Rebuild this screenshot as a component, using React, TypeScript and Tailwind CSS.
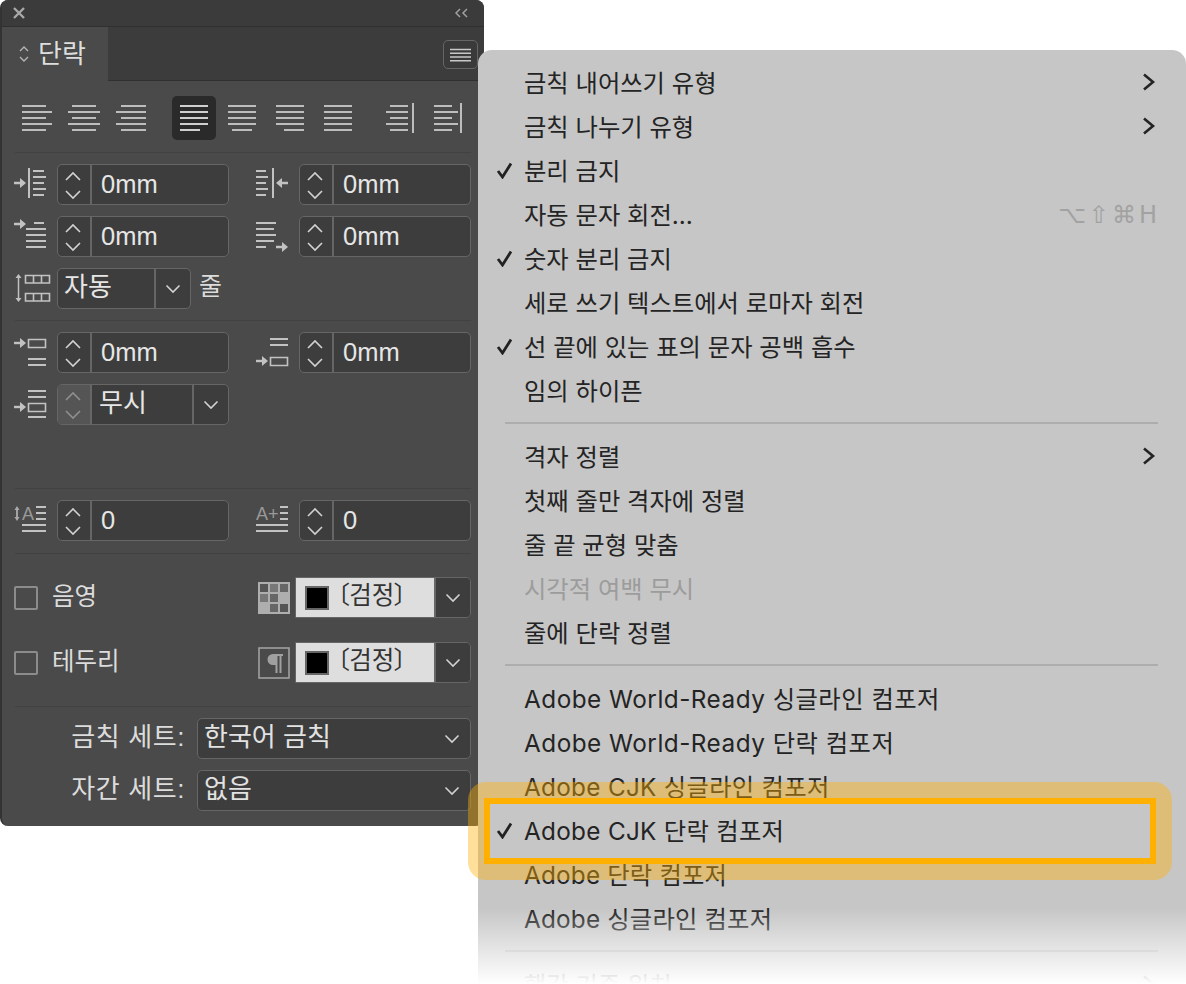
import type { ReactNode } from "react";

const font = "font-['Liberation_Sans','Noto_Sans_CJK_KR',sans-serif]";

function Up({ x, y, dim }: { x: number; y: number; dim?: boolean }) {
  return <path d={`M${x - 7} ${y + 4}L${x} ${y - 3}L${x + 7} ${y + 4}`} stroke={dim ? "#8f8f8f" : "#d2d2d2"} strokeWidth="1.6" fill="none" />;
}
function Down({ x, y, dim }: { x: number; y: number; dim?: boolean }) {
  return <path d={`M${x - 7} ${y - 4}L${x} ${y + 3}L${x + 7} ${y - 4}`} stroke={dim ? "#8f8f8f" : "#d2d2d2"} strokeWidth="1.6" fill="none" />;
}

function Chevron() {
  return (
    <svg width="16" height="10" viewBox="0 0 16 10" fill="none">
      <path d="M1.5 1.5L8 8L14.5 1.5" stroke="#d2d2d2" strokeWidth="1.6" />
    </svg>
  );
}

function Stepper({ dim }: { dim?: boolean }) {
  return (
    <div className={`w-[34px] h-full shrink-0 border-r-2 border-[#666666] ${dim ? "bg-[#555555]" : ""}`}>
      <svg width="33" height="39" viewBox="0 0 33 39">
        <Up x={15} y={11} dim={dim} />
        <Down x={15} y={30} dim={dim} />
      </svg>
    </div>
  );
}

function Field({ value }: { value: string }) {
  return (
    <div className="w-[172px] h-[41px] flex items-center rounded-[5px] border border-[#666666] bg-[#3d3d3d] overflow-hidden">
      <Stepper />
      <span className="pl-[9px] pt-[1px] text-[25.5px] leading-none text-[#e6e6e6]">{value}</span>
    </div>
  );
}

function Glyph({ box, children }: { box: string; children: ReactNode }) {
  return (
    <svg width="43" height="41" viewBox={box} className="shrink-0" stroke="#c2c2c2" strokeWidth="2" fill="none">
      {children}
    </svg>
  );
}

function ArrowRight({ x, y, len = 12 }: { x: number; y: number; len?: number }) {
  return (
    <g>
      <path d={`M${x} ${y}H${x + len - 3}`} strokeWidth="2.4" />
      <path d={`M${x + len - 6} ${y - 5}L${x + len} ${y}L${x + len - 6} ${y + 5}Z`} fill="#c2c2c2" stroke="none" />
    </g>
  );
}

function Lines({ rows }: { rows: [number, number, number][] }) {
  return <path d={rows.map(([a, b, y]) => `M${a} ${y}H${b}`).join("")} />;
}

function AlignIcon({ rows, bar, width, active }: { rows: [number, number][]; bar?: boolean; width: number; active?: boolean }) {
  return (
    <svg width={width} height="32" viewBox={`0 0 ${width} 32`} stroke={active ? "#cfcfcf" : "#bdbdbd"} strokeWidth="2" fill="none" className="shrink-0">
      {rows.map(([a, b], i) => (
        <path key={i} d={`M${a} ${4 + i * 6}H${b}`} />
      ))}
      {bar && <path d={`M${width - 1} 1V31`} />}
    </svg>
  );
}

function Separator({ className }: { className: string }) {
  return <div className={`h-px mx-[13px] bg-[#414141] ${className}`} />;
}

function ColorRow({ label, icon, className }: { label: string; icon: ReactNode; className: string }) {
  return (
    <div className={`flex items-center h-[41px] pl-[12px] ${className}`}>
      <div className="w-[24px] h-[24px] rounded-[2px] border-2 border-[#8c8c8c] shrink-0" />
      <span className="ml-[14px] pb-[1px] text-[24.5px] leading-none text-[#dcdcdc]">{label}</span>
      <div className="ml-auto mr-[5px]">{icon}</div>
      <div className="mr-[13px] w-[176px] h-[41px] flex rounded-r-[5px] border border-[#666666] overflow-hidden">
        <div className="flex-1 bg-[#dedede] flex items-center pl-[9px]">
          <div className="w-[24px] h-[24px] bg-black border-2 border-[#666666]" />
          <span className="ml-[8px] pb-[2px] text-[24.5px] leading-none text-[#333333] [font-feature-settings:'palt']">〔검정〕</span>
        </div>
        <div className="w-[36px] bg-[#3d3d3d] border-l-2 border-[#666666] flex items-center justify-center">
          <Chevron />
        </div>
      </div>
    </div>
  );
}

function SelectRow({ label, value, className }: { label: string; value: string; className: string }) {
  return (
    <div className={`flex items-center ${className}`}>
      <span className="w-[183px] pb-[3px] text-right text-[26px] tracking-[0.6px] leading-none text-[#dcdcdc] whitespace-nowrap">{label}</span>
      <div className="ml-[12px] w-[274px] h-[41px] flex items-center justify-between pl-[6px] pr-[10px] rounded-[5px] border border-[#666666] bg-[#3d3d3d]">
        <span className="pb-[3px] text-[26px] leading-none text-[#e2e2e2]">{value}</span>
        <Chevron />
      </div>
    </div>
  );
}

function Panel() {
  return (
    <div className="w-[484px] h-[826px] rounded-[8px] bg-[#4a4a4a] border-l-2 border-[#333333] overflow-hidden">
      <div className="h-[27px] bg-[#3b3b3b] border-b border-[#303030] flex items-center justify-between pl-[10px] pr-[15px]">
        <svg width="14" height="14" viewBox="0 0 14 14" stroke="#a8a8a8" strokeWidth="2.4">
          <path d="M2 2L12 12M12 2L2 12" />
        </svg>
        <svg width="14" height="10" viewBox="0 0 14 10" stroke="#a0a0a0" strokeWidth="1.5" fill="none">
          <path d="M5 1L1 5L5 9M12 1L8 5L12 9" />
        </svg>
      </div>
      <div className="h-[54px] bg-[#3c3c3c] border-b border-[#303030] flex">
        <div className="w-[106px] h-[54px] bg-[#4a4a4a] flex items-center pl-[16px]">
          <svg width="12" height="18" viewBox="0 0 12 18" stroke="#b4b4b4" strokeWidth="1.4" fill="none">
            <path d="M2 6L6 2L10 6M2 12L6 16L10 12" />
          </svg>
          <span className="ml-[8px] text-[26px] leading-none text-[#dedede]">단락</span>
        </div>
        <div className="ml-auto mr-[6px] mt-[13px] w-[35px] h-[29px] rounded-[5px] border border-[#666666] bg-[#3a3a3a] flex items-center justify-center">
          <svg width="21" height="14" viewBox="0 0 21 14" stroke="#c8c8c8" strokeWidth="1.6">
            <path d="M0 1.5H21M0 5.3H21M0 9H21M0 12.8H21" />
          </svg>
        </div>
      </div>

      <div className="mt-[15px] flex items-center pl-[20px] h-[44px]">
        <AlignIcon width={30} rows={[[0, 24], [0, 30], [0, 24], [0, 30], [0, 24]]} />
        <div className="ml-[16px]"><AlignIcon width={32} rows={[[4, 28], [0, 32], [4, 28], [0, 32], [4, 28]]} /></div>
        <div className="ml-[16px]"><AlignIcon width={30} rows={[[5, 30], [0, 30], [5, 30], [0, 30], [5, 30]]} /></div>
        <div className="ml-[26px] w-[44px] h-[44px] rounded-[5px] bg-[#2a2a2a] flex items-center justify-center">
          <AlignIcon active width={28} rows={[[0, 28], [0, 28], [0, 28], [0, 28], [0, 20]]} />
        </div>
        <div className="ml-[12px]"><AlignIcon width={28} rows={[[0, 28], [0, 28], [0, 28], [0, 28], [4, 24]]} /></div>
        <div className="ml-[20px]"><AlignIcon width={28} rows={[[0, 28], [0, 28], [0, 28], [0, 28], [8, 28]]} /></div>
        <div className="ml-[20px]"><AlignIcon width={28} rows={[[0, 28], [0, 28], [0, 28], [0, 28], [0, 28]]} /></div>
        <div className="ml-[34px]"><AlignIcon bar width={28} rows={[[4, 22], [0, 22], [4, 22], [0, 22], [4, 22]]} /></div>
        <div className="ml-[20px]"><AlignIcon bar width={28} rows={[[0, 18], [0, 24], [0, 18], [0, 24], [0, 18]]} /></div>
      </div>

      <Separator className="mt-[12px]" />

      <div className="mt-[11px] flex pl-[12px]">
        <Glyph box="14 164 43 41">
          <ArrowRight x={14} y={183} />
          <path d="M29 168V198" />
          <Lines rows={[[33, 44, 171], [33, 46, 177], [33, 44, 183], [33, 46, 189], [33, 44, 195]]} />
        </Glyph>
        <Field value="0mm" />
        <div className="ml-[27px] flex">
          <Glyph box="256 164 43 41">
            <Lines rows={[[256, 266, 171], [256, 268, 177], [256, 266, 183], [256, 268, 189], [256, 266, 195]]} />
            <path d="M273 168V198" />
            <path d="M288 183H280" strokeWidth="2.4" />
            <path d="M282 178L276 183L282 188Z" fill="#c2c2c2" stroke="none" />
          </Glyph>
          <Field value="0mm" />
        </div>
      </div>

      <div className="mt-[11px] flex pl-[12px]">
        <Glyph box="14 216 43 41">
          <ArrowRight x={14} y={224} />
          <Lines rows={[[34, 44, 223], [26, 46, 229], [26, 46, 235], [26, 46, 241], [26, 46, 247]]} />
        </Glyph>
        <Field value="0mm" />
        <div className="ml-[27px] flex">
          <Glyph box="256 216 43 41">
            <Lines rows={[[256, 276, 223], [256, 274, 229], [256, 276, 235], [256, 274, 241], [256, 266, 247]]} />
            <ArrowRight x={276} y={247} />
          </Glyph>
          <Field value="0mm" />
        </div>
      </div>

      <div className="mt-[11px] flex items-center pl-[12px]">
        <Glyph box="14 268 43 41">
          <path d="M18.5 277V299" strokeWidth="1.5" />
          <path d="M15.5 278L18.5 274L21.5 278ZM15.5 298L18.5 302L21.5 298Z" fill="#c2c2c2" stroke="none" />
          <path strokeWidth="1.6" d="M25.5 275.5H49.5V283H25.5ZM33.5 275.5V283M41.5 275.5V283M25.5 293.5H49.5V301H25.5ZM33.5 293.5V301M41.5 293.5V301" />
        </Glyph>
        <div className="w-[134px] h-[41px] flex items-center rounded-[5px] border border-[#666666] bg-[#3d3d3d] overflow-hidden">
          <span className="flex-1 pl-[6px] pb-[4px] text-[26px] leading-none text-[#e6e6e6]">자동</span>
          <div className="w-[36px] h-full border-l-2 border-[#666666] flex items-center justify-center">
            <Chevron />
          </div>
        </div>
        <span className="ml-[8px] pb-[4px] text-[25px] leading-none text-[#dcdcdc]">줄</span>
      </div>

      <Separator className="mt-[11px]" />

      <div className="mt-[11px] flex pl-[12px]">
        <Glyph box="14 332 43 41">
          <ArrowRight x={14} y={343} />
          <path strokeWidth="1.6" d="M28.5 339.5H45.5V347.5H28.5Z" />
          <Lines rows={[[28, 46, 359], [28, 46, 365]]} />
        </Glyph>
        <Field value="0mm" />
        <div className="ml-[27px] flex">
          <Glyph box="256 332 43 41">
            <Lines rows={[[270, 288, 339], [270, 288, 345]]} />
            <path strokeWidth="1.6" d="M270.5 357.5H287.5V365.5H270.5Z" />
            <ArrowRight x={256} y={361} />
          </Glyph>
          <Field value="0mm" />
        </div>
      </div>

      <div className="mt-[11px] flex pl-[12px]">
        <Glyph box="14 384 43 41">
          <ArrowRight x={14} y={407} />
          <Lines rows={[[28, 46, 391], [28, 46, 397], [28, 46, 417]]} />
          <path strokeWidth="1.6" d="M28.5 403.5H45.5V411.5H28.5Z" />
        </Glyph>
        <div className="w-[172px] h-[41px] flex items-center rounded-[5px] border border-[#666666] bg-[#3d3d3d] overflow-hidden">
          <Stepper dim />
          <span className="flex-1 pl-[7px] pb-[4px] text-[26px] leading-none text-[#e6e6e6]">무시</span>
          <div className="w-[36px] h-full border-l-2 border-[#666666] flex items-center justify-center">
            <Chevron />
          </div>
        </div>
      </div>

      <Separator className="mt-[63px]" />

      <div className="mt-[11px] flex pl-[12px]">
        <Glyph box="14 500 43 41">
          <path d="M17 510V517" strokeWidth="1.5" />
          <path d="M14.5 510L17 506L19.5 510ZM14.5 517L17 521L19.5 517Z" fill="#aaaaaa" stroke="none" />
          <text x="22" y="520" fontSize="18" fill="#999999" stroke="none" fontFamily="Liberation Sans">A</text>
          <Lines rows={[[36, 46, 507], [36, 46, 513], [36, 46, 519], [22, 46, 525], [22, 46, 531]]} />
        </Glyph>
        <Field value="0" />
        <div className="ml-[27px] flex">
          <Glyph box="256 500 43 41">
            <text x="256" y="520" fontSize="18" fill="#999999" stroke="none" fontFamily="Liberation Sans">A+</text>
            <Lines rows={[[280, 288, 507], [280, 288, 513], [280, 288, 519], [256, 288, 525], [256, 288, 531]]} />
          </Glyph>
          <Field value="0" />
        </div>
      </div>

      <Separator className="mt-[12px]" />

      <ColorRow
        className="mt-[23px]"
        label="음영"
        icon={
          <svg width="32" height="32" viewBox="0 0 32 32" className="block">
            <rect width="32" height="32" fill="#aeaeae" />
            <rect x="2" y="2" width="8" height="8" fill="#555555" />
            <rect x="12" y="2" width="8" height="8" fill="#777777" />
            <rect x="22" y="2" width="8" height="8" fill="#666666" />
            <rect x="2" y="12" width="8" height="8" fill="#777777" />
            <rect x="12" y="12" width="8" height="8" fill="#666666" />
            <rect x="12" y="22" width="8" height="8" fill="#666666" />
            <rect x="22" y="22" width="8" height="8" fill="#555555" />
          </svg>
        }
      />
      <ColorRow
        className="mt-[24px]"
        label="테두리"
        icon={
          <svg width="32" height="32" viewBox="0 0 32 32" className="block">
            <rect x="1" y="1" width="30" height="30" fill="none" stroke="#a0a0a0" strokeWidth="1.6" />
            <path d="M15 7H25V9H23.5V26H21.5V9H19.5V26H17.5V18H15A5.5 5.5 0 0 1 15 7Z" fill="#a0a0a0" />
          </svg>
        }
      />

      <Separator className="mt-[23px]" />

      <SelectRow className="mt-[11px]" label="금칙 세트:" value="한국어 금칙" />
      <SelectRow className="mt-[11px]" label="자간 세트:" value="없음" />
    </div>
  );
}

function Check() {
  return (
    <svg width="17" height="17" viewBox="0 0 17 17" fill="none" className="absolute left-[18px] top-[14px]">
      <path d="M2 9L6.5 15L15 1.5" stroke="#222222" strokeWidth="2.8" />
    </svg>
  );
}

function MenuItem({ label, checked, arrow, shortcut, disabled, spacing = "" }: { label: string; checked?: boolean; arrow?: boolean; shortcut?: string; disabled?: boolean; spacing?: string }) {
  return (
    <div className={`relative h-[44px] flex items-center pl-[46px] pr-[30px] ${disabled ? "text-[#9c9c9c]" : "text-[#242424]"}`}>
      {checked && <Check />}
      <span className={`pt-[2px] text-[24.3px] leading-none whitespace-nowrap font-['Inter','Noto_Sans_CJK_KR',sans-serif] ${spacing}`}>{label}</span>
      {arrow && (
        <svg width="14" height="18" viewBox="0 0 14 18" fill="none" className="ml-auto">
          <path d="M2 1.5L11 9L2 16.5" stroke="#242424" strokeWidth="2.6" />
        </svg>
      )}
      {shortcut && <span className="ml-auto -mr-[4px] pt-[2px] text-[24px] tracking-[3px] leading-none text-[#a2a2a2] font-['DejaVu_Sans',sans-serif]">{shortcut}</span>}
    </div>
  );
}

function MenuDivider() {
  return (
    <div className="h-[22px] flex items-center pl-[27px] pr-[28px]">
      <div className="h-[2px] w-full bg-[#adadad]" />
    </div>
  );
}

function Menu() {
  return (
    <div className="absolute left-[478px] top-[50px] w-[708px] h-[934px] rounded-t-[14px] bg-[#c6c6c6] pt-[10px] overflow-hidden">
      <MenuItem label="금칙 내어쓰기 유형" arrow />
      <MenuItem label="금칙 나누기 유형" arrow />
      <MenuItem label="분리 금지" checked />
      <MenuItem label="자동 문자 회전..." shortcut="⌥⇧⌘H" />
      <MenuItem label="숫자 분리 금지" checked />
      <MenuItem label="세로 쓰기 텍스트에서 로마자 회전" />
      <MenuItem label="선 끝에 있는 표의 문자 공백 흡수" checked />
      <MenuItem label="임의 하이픈" />
      <MenuDivider />
      <MenuItem label="격자 정렬" arrow />
      <MenuItem label="첫째 줄만 격자에 정렬" />
      <MenuItem label="줄 끝 균형 맞춤" />
      <MenuItem label="시각적 여백 무시" disabled />
      <MenuItem label="줄에 단락 정렬" />
      <MenuDivider />
      <MenuItem label="Adobe World-Ready 싱글라인 컴포저" spacing="tracking-[0.5px]" />
      <MenuItem label="Adobe World-Ready 단락 컴포저" spacing="tracking-[0.5px]" />
      <MenuItem label="Adobe CJK 싱글라인 컴포저" spacing="tracking-[0.3px]" />
      <MenuItem label="Adobe CJK 단락 컴포저" checked spacing="tracking-[0.3px]" />
      <MenuItem label="Adobe 단락 컴포저" spacing="tracking-[0.2px]" />
      <MenuItem label="Adobe 싱글라인 컴포저" spacing="tracking-[0.2px]" />
      <MenuDivider />
      <MenuItem label="행간 기준 위치" arrow />
      <div className="absolute left-0 right-0 bottom-0 h-[76px] bg-gradient-to-b from-white/0 to-white" />
    </div>
  );
}

export default function App() {
  return (
    <div className={`relative w-[1186px] h-[984px] bg-white overflow-hidden ${font}`}>
      <Panel />
      <Menu />
      <div className="absolute left-[468px] top-[782px] w-[704px] h-[98px] rounded-[18px] border-[16px] border-[#ffb000]/40">
        <div className="h-full border-[6px] border-[#ffb000]" />
      </div>
    </div>
  );
}
